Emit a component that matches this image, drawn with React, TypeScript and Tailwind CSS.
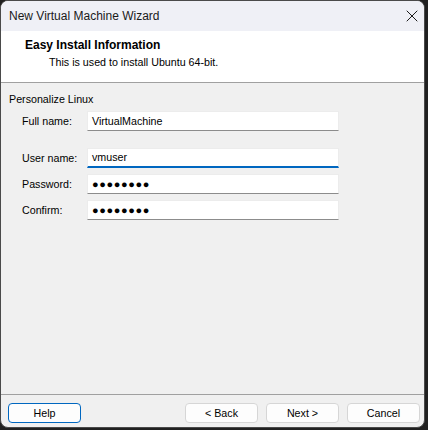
import { X } from 'lucide-react'

const FONT = { fontFamily: '"Liberation Sans", Arial, sans-serif' }

function Field({ label, value, focused, secret }: { label: string; value: string; focused?: boolean; secret?: boolean }) {
  return (
    <div className="flex items-center h-[20px]">
      <span className="w-[65px] text-[10.7px] text-black">{label}</span>
      <div
        className={
          'w-[252px] h-[20px] bg-white border border-[#ececec] flex items-center pl-[4px] text-[10.7px] text-black ' +
          (focused ? 'border-b-2 border-b-[#0067c0]' : 'border-b-[#8c8c8c]')
        }
      >
        {secret ? (
          <span className="text-[11px] tracking-[0.6px] leading-none">{value}</span>
        ) : (
          value
        )}
      </div>
    </div>
  )
}

function Btn({ label, focus }: { label: string; focus?: boolean }) {
  return (
    <button
      className={
        'w-[73px] h-[20px] rounded-[4px] bg-[#fdfdfd] text-[10.7px] text-black flex items-center justify-center border ' +
        (focus ? 'border-[#0067c0]' : 'border-[#d6d6d6]')
      }
    >
      {label}
    </button>
  )
}

export default function App() {
  return (
    <div className="w-[428px] h-[430px] bg-[#202020]" style={FONT}>
      <div className="w-[425px] h-[428px] rounded-[8px] border border-[#4a4a4a] overflow-hidden flex flex-col bg-[#f0f0f0]">
        {/* title bar */}
        <div className="h-[30px] bg-[#eff0f6] flex items-center justify-between pl-[8px] pr-[2px]">
          <span className="text-[12px] text-[#1a1a1a]">New Virtual Machine Wizard</span>
          <X className="w-[20px] h-[20px] text-[#1a1a1a]" strokeWidth={1.2} />
        </div>

        {/* header */}
        <div className="h-[52px] bg-white border-b border-[#a0a0a0] pl-[24px] pt-[6px]">
          <p className="text-[12px] font-bold text-black leading-[16px]">Easy Install Information</p>
          <p className="text-[10.7px] text-black leading-[16px] pl-[24px] mt-[1px]">This is used to install Ubuntu 64-bit.</p>
        </div>

        {/* body */}
        <div className="flex-1 pl-[8px] pt-[8px]">
          <p className="text-[10.7px] text-black leading-[16px]">Personalize Linux</p>
          <div className="pl-[13px] mt-[4px] flex flex-col">
            <Field label="Full name:" value="VirtualMachine" />
            <div className="h-[17px]" />
            <Field label="User name:" value="vmuser" focused />
            <div className="h-[6px]" />
            <Field label="Password:" value="●●●●●●●●" secret />
            <div className="h-[6px]" />
            <Field label="Confirm:" value="●●●●●●●●" secret />
          </div>
        </div>

        {/* footer */}
        <div className="h-[33px] border-t border-[#a0a0a0] flex items-start pt-[8px] pl-[7px] pr-[4px]">
          <Btn label="Help" focus />
          <div className="flex-1" />
          <div className="flex gap-[8px]">
            <Btn label="< Back" />
            <Btn label="Next >" />
            <Btn label="Cancel" />
          </div>
        </div>
      </div>
    </div>
  )
}
